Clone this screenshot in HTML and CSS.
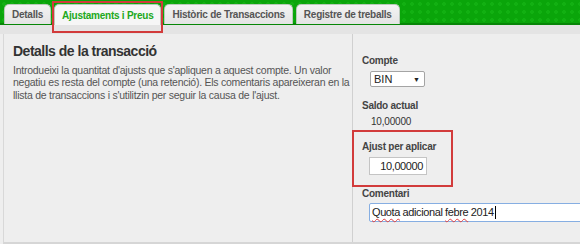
FILE: index.html
```html
<!DOCTYPE html>
<html lang="ca">
<head>
<meta charset="utf-8">
<link rel="stylesheet" href="styles.css">
</head>
<body>
<div class="header">
  <div class="tabs">
    <div class="tab">Detalls</div>
    <div class="tab active">Ajustaments i Preus</div>
    <div class="tab">Històric de Transaccions</div>
    <div class="tab">Registre de treballs</div>
  </div>
</div>
<div class="band"></div>
<div class="main">
  <div class="left">
    <h1 class="title">Detalls de la transacció</h1>
    <p class="desc">Introdueixi la quantitat d'ajusts que s'apliquen a aquest compte. Un valor negatiu es resta del compte (una retenció). Els comentaris apareixeran en la llista de transaccions i s'utilitzin per seguir la causa de l'ajust.</p>
  </div>
  <div class="right">
    <div class="label">Compte</div>
    <div class="select"><span>BIN</span><span class="arrow">▼</span></div>
    <div class="label gap">Saldo actual</div>
    <div class="value">10,00000</div>
    <div class="highlight">
      <div class="label">Ajust per aplicar</div>
      <div class="input num">10,00000</div>
    </div>
    <div class="label gap2">Comentari</div>
    <div class="input wide"><span class="spell">Quota</span> adicional <span class="spell">febre</span> 2014<span class="caret"></span></div>
  </div>
</div>
</body>
</html>
```
FILE: styles.css
```css
* { box-sizing: border-box; }
body {
  margin: 0;
  width: 580px;
  height: 244px;
  overflow: hidden;
  background: #eeeeee;
  font-family: "Liberation Sans", Arial, sans-serif;
  color: #333;
}
.header {
  height: 25px;
  background-color: #0aa50a;
  background-image: radial-gradient(circle, #12b012 30%, transparent 38%);
  background-size: 8px 8px;
  border-bottom: 2px solid #078607;
  display: flex;
  align-items: flex-end;
  padding-left: 4px;
}
.tabs { display: flex; gap: 3px; }
.tab {
  position: relative;
  height: 20px;
  padding: 0 7px;
  line-height: 20px;
  background: linear-gradient(#f3f3f3, #e4e4e4);
  border: 1px solid #b9c9b9;
  border-bottom: none;
  border-radius: 5px 5px 0 0;
  font-size: 10px;
  font-weight: bold;
  letter-spacing: -0.25px;
  color: #555;
  margin-bottom: -2px;
}
.tab.active {
  background: #f6f6f6;
  color: #20a820;
  height: 21px;
  line-height: 22px;
}
.tab.active::after {
  content: "";
  position: absolute;
  left: -3px; right: -3px; top: -4px; bottom: -8px;
  border: 2px solid #d23b3b;
}
.band {
  height: 9px;
  background: #e4e4e4;
}
.main {
  display: flex;
  margin-left: 3px;
  height: 210px;
  border-left: 1px solid #d8d8d8;
  border-bottom: 2px solid #d6d6d6;
}
.left {
  width: 349px;
  padding: 8px 0 0 9px;
  border-right: 1px solid #d0d0d0;
  border-top-left-radius: 3px;
}
.title {
  margin: 0;
  font-size: 14px;
  letter-spacing: -0.5px;
  font-weight: bold;
  color: #333;
  line-height: 18px;
}
.desc {
  margin: 4px 0 0;
  font-size: 10.5px;
  letter-spacing: -0.25px;
  line-height: 12.3px;
  color: #555;
  width: 338px;
}
.right {
  flex: 1;
  padding: 21px 0 0 9px;
}
.label {
  font-size: 10px;
  font-weight: bold;
  letter-spacing: -0.25px;
  color: #444;
  line-height: 12px;
}
.label.gap { margin-top: 13px; }
.label.gap2 { margin-top: 13px; }
.select {
  margin: 4px 0 0 8px;
  width: 55px;
  height: 16px;
  border: 1px solid #a4a4a4;
  border-radius: 2px;
  background: #fff;
  font-size: 11px;
  display: flex;
  justify-content: space-between;
  align-items: center;
  padding: 0 4px 0 3px;
  color: #222;
}
.arrow { font-size: 7px; }
.value {
  margin: 4px 0 0 9px;
  font-size: 10px;
  letter-spacing: -0.2px;
  line-height: 12px;
  color: #333;
}
.highlight {
  position: relative;
  margin-top: 13px;
}
.highlight::after {
  content: "";
  position: absolute;
  left: -10px; width: 97px; top: -11px; height: 53px;
  border: 2px solid #d23b3b;
}
.input {
  margin: 4px 0 0 7px;
  height: 18px;
  background: #fff;
  border: 1px solid #c4c4c4;
  font-size: 11px;
  letter-spacing: -0.4px;
  line-height: 16px;
  color: #222;
  padding: 0 3px;
}
.input.num { width: 58px; text-align: right; }
.input.wide {
  margin-top: 3px;
  height: 19px;
  margin-right: -4px;
  border: 1px solid #86aee2;
  border-radius: 2px;
  padding-left: 2px;
  line-height: 17px;
}
.spell {
  text-decoration: underline wavy #e04040;
  text-decoration-thickness: 1px;
  text-underline-offset: 2px;
}
.caret {
  display: inline-block;
  width: 1px;
  height: 13px;
  margin-left: 1px;
  background: #000;
  vertical-align: -3px;
}
```
